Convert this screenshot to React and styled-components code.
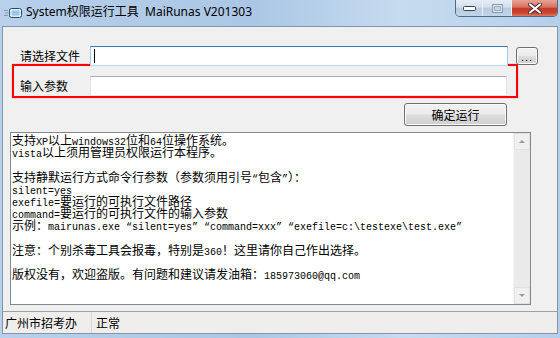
import styled, { createGlobalStyle } from "styled-components"

const GlobalStyle = createGlobalStyle`
  html, body { margin: 0; padding: 0; }
  body {
    background: #b9d1ea;
    font-family: "Noto Sans CJK SC", sans-serif;
  }
`

const Window = styled.div`
  width: 560px;
  height: 338px;
  box-sizing: border-box;
  padding: 0 2px 4px 2px;
  display: flex;
  flex-direction: column;
  overflow: hidden;
  background: linear-gradient(to right, #b8d0ea 0%, #abc7e5 45%, #c6dbef 72%, #b6cfe9 100%);
`

const TitleBar = styled.div`
  height: 26px;
  flex: none;
  display: flex;
  align-items: flex-start;
`

const TitleIcon = styled.svg`
  margin: 8px 0 0 2px;
  flex: none;
`

const TitleText = styled.div`
  margin: 4px 0 0 4px;
  font-family: "Noto Sans", "Noto Sans CJK SC", sans-serif;
  font-size: 12px;
  line-height: 16px;
  color: #000;
  white-space: pre;
`

const Captions = styled.div`
  margin-left: auto;
  display: flex;
  height: 17px;
  box-sizing: border-box;
  border: 1px solid #4f6b8c;
  border-top: none;
  border-radius: 0 0 5px 5px;
  overflow: hidden;
`

const CaptionButton = styled.div`
  width: ${p => p.$w}px;
  height: 100%;
  display: flex;
  align-items: center;
  justify-content: center;
  box-sizing: border-box;
  border-left: ${p => (p.$first ? "none" : "1px solid #e9eff6")};
  background: ${p =>
    p.$close
      ? "linear-gradient(#e6a596 0%, #d9705f 45%, #c43c29 52%, #c9442f 80%, #de7a5f 100%)"
      : "linear-gradient(#e6edf6 0%, #d3dfec 45%, #b9cbe0 52%, #c2d4e8 100%)"};
`

const Client = styled.div`
  flex: 1;
  display: flex;
  flex-direction: column;
  background: #f0f0f0;
  border: 1px solid #8196ae;
  font-size: 12px;
  color: #000;
`

const Row = styled.div`
  display: flex;
  align-items: center;
  margin-top: 19px;
  padding-left: 17px;
`

const Label = styled.div`
  width: 70px;
  flex: none;
  font-size: 12px;
  line-height: 14px;
`

const Field = styled.div`
  width: ${p => p.$w}px;
  height: 20px;
  box-sizing: border-box;
  background: #fff;
  border: 1px solid;
  border-color: ${p =>
    p.$focused ? "#3d7bad #a4c9e3 #b7d9ed #a4c9e3" : "#abadb3 #e2e3ea #e3e9ef #e2e3ea"};
  position: relative;
  ${p =>
    p.$focused &&
    `&::after {
      content: "";
      position: absolute;
      left: 3px;
      top: 2px;
      width: 1px;
      height: 14px;
      background: #000;
    }`}
`

const WinButton = styled.div`
  width: ${p => p.$w}px;
  height: ${p => p.$h}px;
  box-sizing: border-box;
  border: 1px solid #707070;
  border-radius: 3px;
  box-shadow: inset 0 0 0 1px #fbfbfb;
  background: linear-gradient(#f2f2f2 0%, #ebebeb 48%, #dddddd 52%, #cfcfcf 100%);
  display: flex;
  align-items: center;
  justify-content: center;
  font-size: 12px;
  line-height: 14px;
  flex: none;
`

const BrowseButton = styled(WinButton)`
  margin-left: 8px;
  font-family: "Liberation Sans", sans-serif;
  font-size: 11px;
  letter-spacing: 1px;
  padding-top: 2px;
`

const Highlight = styled.div`
  margin: -2px 0 0 9px;
  width: 506px;
  height: 34px;
  box-sizing: border-box;
  border: 2px solid #ff0000;
  box-shadow: 0 0 1px #ff6060;
  padding: 10px 0 0 6px;
  display: flex;
  align-items: center;
`

const RunButton = styled(WinButton)`
  margin: 5px 0 0 401px;
`

const TextBox = styled.div`
  margin: 6px 0 0 7px;
  width: 521px;
  height: 173px;
  box-sizing: border-box;
  border: 1px solid #828790;
  background: #fff;
  display: flex;
`

const TextBody = styled.div`
  flex: 1;
  padding: 1px 0 0 1px;
  font-family: "Noto Sans CJK SC", sans-serif;
  font-size: 12px;
`

const Line = styled.div`
  height: 12.2px;
  line-height: 12.2px;
  white-space: pre;
`

const Latin = styled.span`
  font-family: "Liberation Mono", monospace;
  font-size: 10px;
`

const ScrollBar = styled.div`
  width: 17px;
  flex: none;
  display: flex;
  flex-direction: column;
  justify-content: space-between;
  background: #eaeaea;
  border-left: 1px solid #f4f4f4;
  box-sizing: border-box;
`

const ArrowBox = styled.div`
  height: 17px;
  display: flex;
  align-items: center;
  justify-content: center;
  box-sizing: border-box;
  border: 1px solid #e2e2e2;
  background: #f0f0f0;
`

const Arrow = styled.div`
  width: 0;
  height: 0;
  border-left: 3px solid transparent;
  border-right: 3px solid transparent;
  ${p => (p.$down ? "border-top: 3px solid #9a9a9a;" : "border-bottom: 3px solid #9a9a9a;")}
`

const StatusBar = styled.div`
  margin-top: auto;
  height: 22px;
  box-sizing: border-box;
  border-top: 1px solid #a0a0a0;
  background: #f0eeec;
  display: flex;
  align-items: center;
`

const StatusCell = styled.div`
  height: 100%;
  display: flex;
  align-items: center;
  box-sizing: border-box;
  width: ${p => (p.$w ? `${p.$w}px` : "auto")};
  padding-left: ${p => p.$pad}px;
  border-right: ${p => (p.$w ? "1px solid #d9d6d2" : "none")};
  font-size: 12px;
`

const lines = [
  "支持XP以上windows32位和64位操作系统。",
  "vista以上须用管理员权限运行本程序。",
  "",
  "支持静默运行方式命令行参数（参数须用引号“包含”）：",
  "silent=yes",
  "exefile=要运行的可执行文件路径",
  "command=要运行的可执行文件的输入参数",
  "示例：mairunas.exe “silent=yes” “command=xxx” “exefile=c:\\testexe\\test.exe”",
  "",
  "注意：个别杀毒工具会报毒，特别是360！这里请你自己作出选择。",
  "",
  "版权没有，欢迎盗版。有问题和建议请发油箱：185973060@qq.com",
]

// latin runs use the narrow mono face, the rest stays CJK
const runs = text =>
  text.split(/([\x20-\x7e“”]+)/).map((part, i) =>
    i % 2 ? <Latin key={i}>{part}</Latin> : part
  )

const AppIcon = () => (
  <TitleIcon width="18" height="10" viewBox="0 0 18 10">
    <path d="M0 2.5h4M1 5h3M0 7.5h4" stroke="#8a9bb0" strokeWidth="1" />
    <rect x="5.5" y="0.5" width="12" height="9" rx="2" fill="#dfeefb" stroke="#28486e" />
    <rect x="7.5" y="2.5" width="8" height="5" rx="1" fill="#9cc4ea" />
  </TitleIcon>
)

const App = () => (
  <>
    <GlobalStyle />
    <Window>
      <TitleBar>
        <AppIcon />
        <TitleText>System权限运行工具  MaiRunas V201303</TitleText>
        <Captions>
          <CaptionButton $w={26} $first>
            <svg width="13" height="6" viewBox="0 0 13 6">
              <rect x="0.5" y="1.5" width="12" height="4" rx="1" fill="#fff" stroke="#33455c" />
            </svg>
          </CaptionButton>
          <CaptionButton $w={29}>
            <svg width="11" height="9" viewBox="0 0 11 9">
              <rect x="0.5" y="0.5" width="10" height="8" fill="#d9e3ee" stroke="#8c9db2" />
              <rect x="2.5" y="2.5" width="6" height="4" fill="#c7d4e3" stroke="#9fb0c3" />
            </svg>
          </CaptionButton>
          <CaptionButton $w={46} $close>
            <svg width="14" height="11" viewBox="0 0 14 11">
              <path d="M2 1.5L12 9.5M12 1.5L2 9.5" stroke="#4a2a26" strokeWidth="4" strokeLinecap="round" />
              <path d="M2 1.5L12 9.5M12 1.5L2 9.5" stroke="#fff" strokeWidth="2.2" strokeLinecap="round" />
            </svg>
          </CaptionButton>
        </Captions>
      </TitleBar>
      <Client>
        <Row>
          <Label>请选择文件</Label>
          <Field $w={418} $focused />
          <BrowseButton $w={22} $h={18}>...</BrowseButton>
        </Row>
        <Highlight>
          <Label>输入参数</Label>
          <Field $w={417} />
        </Highlight>
        <RunButton $w={103} $h={23}>确定运行</RunButton>
        <TextBox>
          <TextBody>
            {lines.map((l, i) => (
              <Line key={i}>{runs(l)}</Line>
            ))}
          </TextBody>
          <ScrollBar>
            <ArrowBox><Arrow /></ArrowBox>
            <ArrowBox><Arrow $down /></ArrowBox>
          </ScrollBar>
        </TextBox>
        <StatusBar>
          <StatusCell $w={89} $pad={2}>广州市招考办</StatusCell>
          <StatusCell $pad={4}>正常</StatusCell>
        </StatusBar>
      </Client>
    </Window>
  </>
)

export default App
